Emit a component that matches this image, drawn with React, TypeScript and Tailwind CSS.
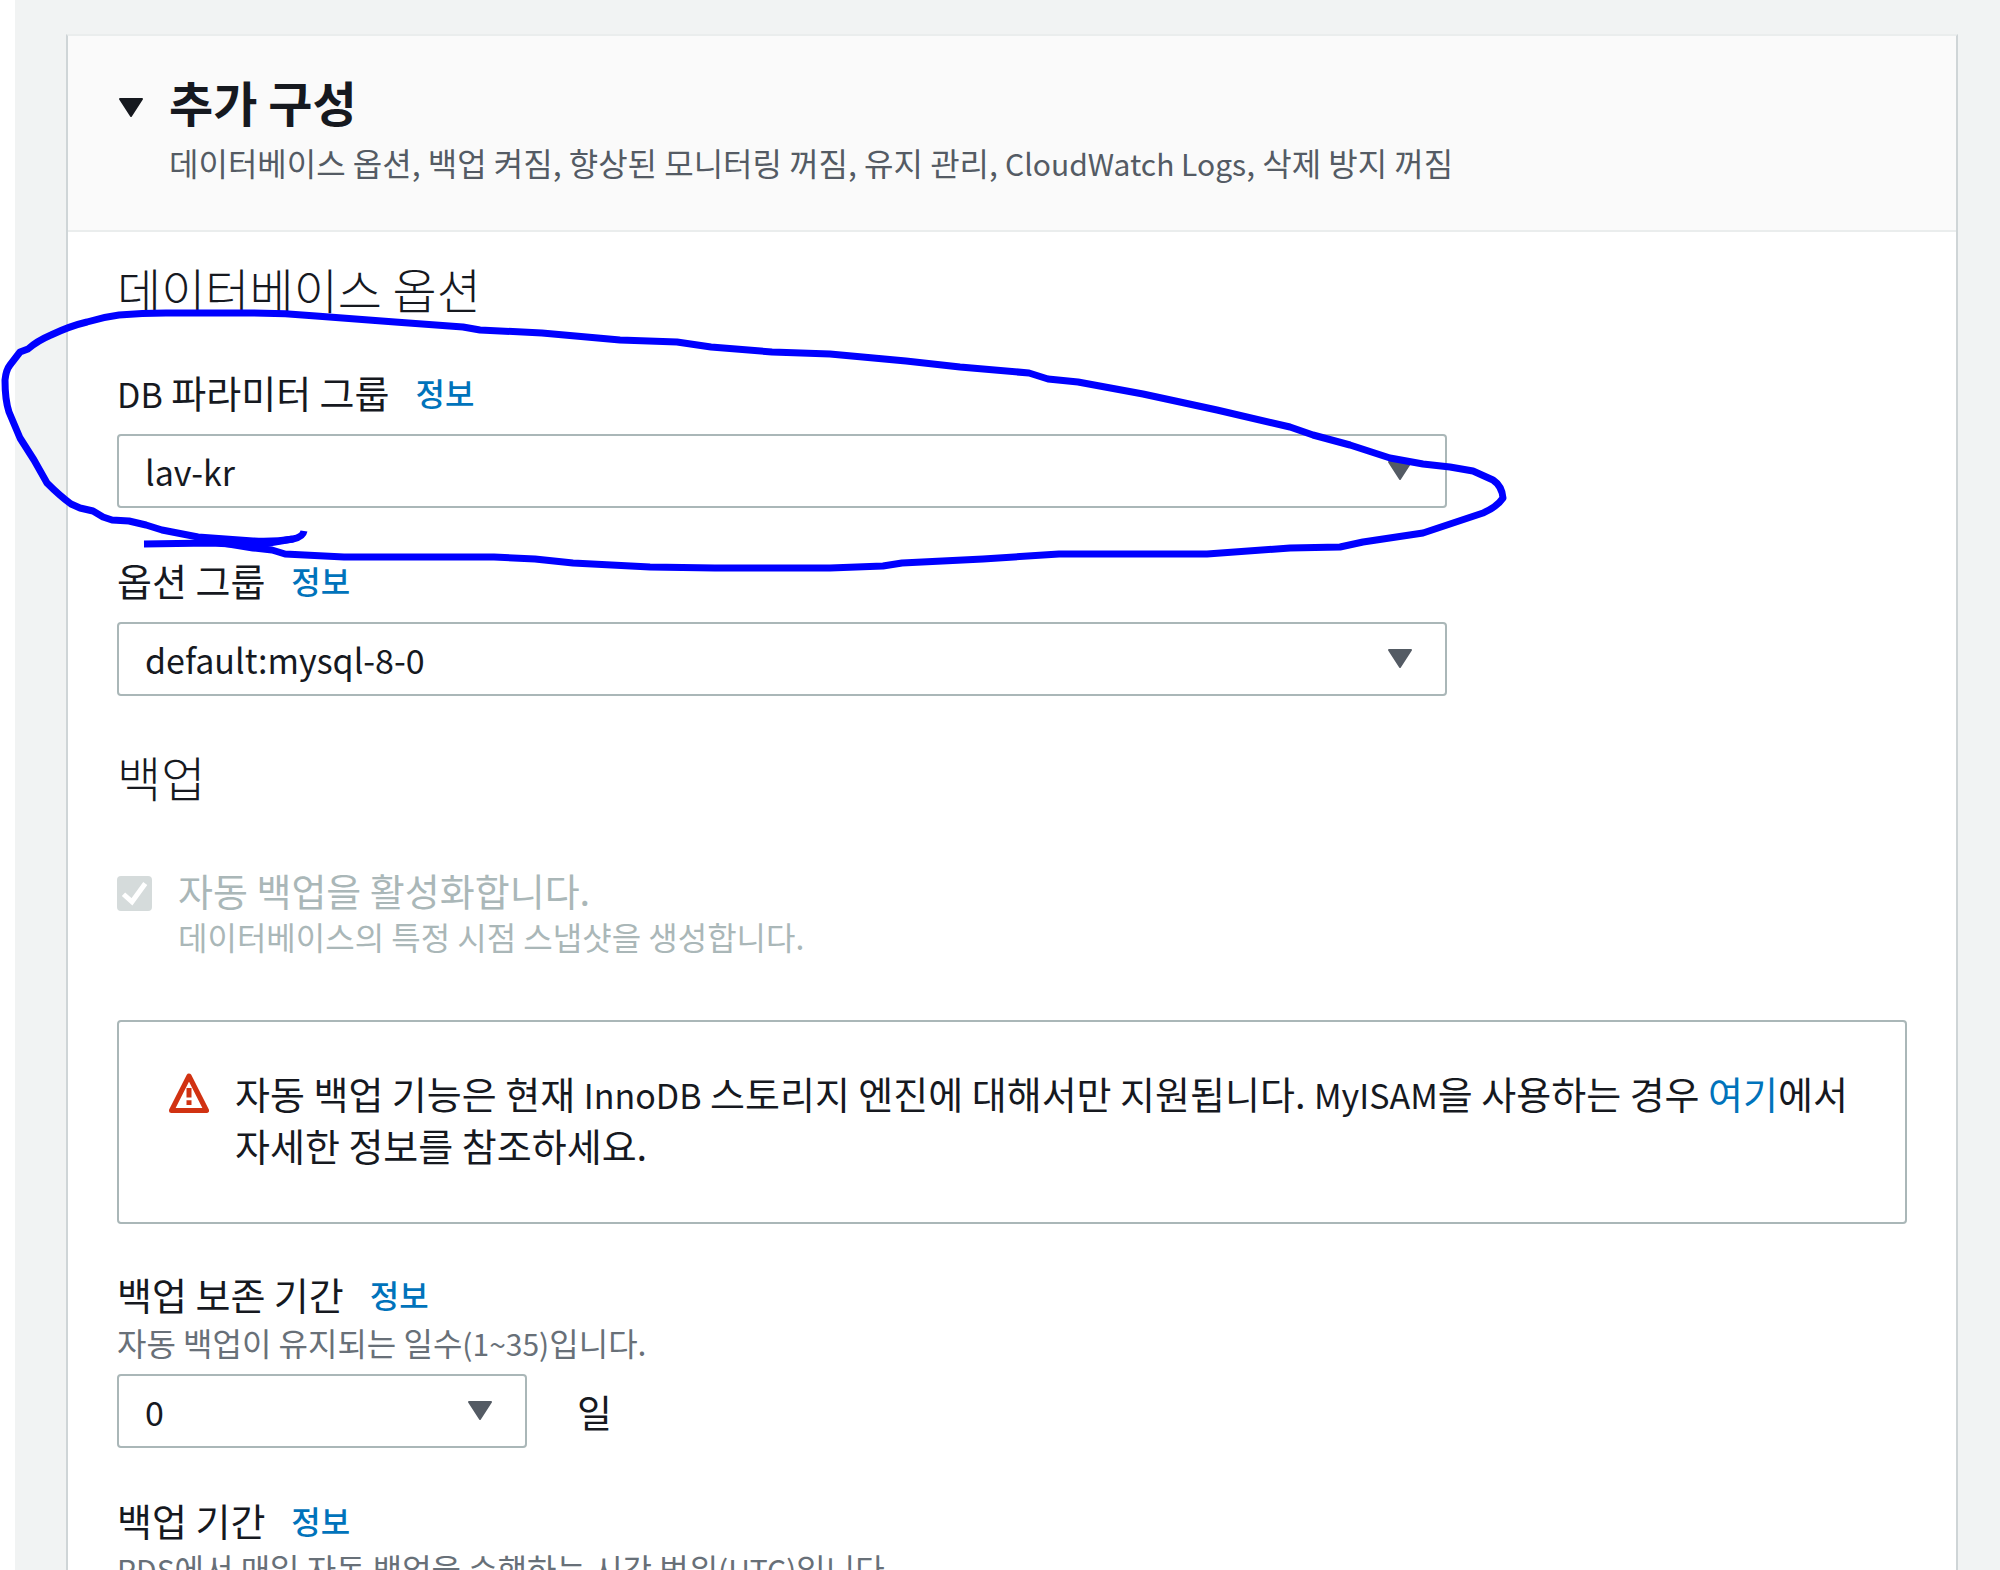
import { useState } from "react";
import type { ReactNode } from "react";
import clsx from "clsx";

const OPTION_GROUPS = ["default:mysql-8-0", "default:mysql-5-7"];
const PARAMETER_GROUPS = ["lav-kr", "default.mysql8.0"];
const RETENTION_DAYS = Array.from({ length: 36 }, (_, i) => String(i));

function Caret({ className }: { className?: string }) {
  return (
    <svg viewBox="0 0 26 22" className={clsx("h-[22px] w-[26px] shrink-0", className)} aria-hidden="true">
      <path d="M2 2h22L13 19z" fill="currentColor" stroke="currentColor" strokeWidth="2" strokeLinejoin="round" />
    </svg>
  );
}

function WarningIcon() {
  return (
    <svg viewBox="0 0 16 16" className="h-10 w-10 shrink-0 text-[#d13212]" fill="none" stroke="currentColor" strokeWidth="2" strokeLinejoin="round" aria-hidden="true">
      <path d="M8 1.2l7 13.8H1z" />
      <path d="M8 6v3.8M8 10.9v1.9" />
    </svg>
  );
}

// Latin runs sit one size below the Hangul around them
function En({ children }: { children: ReactNode }) {
  return <span className="text-[34px] leading-none">{children}</span>;
}
function EnSmall({ children }: { children: ReactNode }) {
  return <span className="text-[30px] leading-none">{children}</span>;
}

function Select({ id, value, options, onChange }: {
  id: string; value: string; options: string[]; onChange: (v: string) => void;
}) {
  return (
    <div className="relative">
      <select
        id={id} value={value}
        onChange={e => onChange(e.target.value)}
        className="block h-[74px] w-full appearance-none rounded-[4px] border-2 border-[#aab7b8] bg-white pl-[26px] pr-20 text-[34px] text-[#16191f]"
      >
        {options.map(o => <option key={o} value={o}>{o}</option>)}
      </select>
      <Caret className="pointer-events-none absolute right-[34px] top-[26px] text-[#545b64]" />
    </div>
  );
}

function FieldLabel({ htmlFor, children }: { htmlFor: string; children: ReactNode }) {
  return (
    <div className="flex items-center gap-[26px] leading-[52px]">
      <label htmlFor={htmlFor} className="text-[38px]">{children}</label>
      <a href="#info" className="text-[32px] font-medium text-[#0073bb]">정보</a>
    </div>
  );
}

// Freehand pen mark around the parameter group field
function PenMark() {
  return (
    <svg viewBox="0 0 1520 600" className="pointer-events-none absolute left-0 top-0 h-[600px] w-[1520px]" fill="none" stroke="#0000ff" strokeWidth="7" strokeLinejoin="round" aria-hidden="true">
      <path d="M304 531Q303 537 293 539Q275 542 253 541L198 537L162 530L146 525L129 521L112 520L103 517L93 511L80 508L71 504Q60 496 47 483L34 460L20 438L9 412Q5 400 5 380Q6 370 10 365L20 352L28 349Q37 341 51 335Q70 326 87 322Q103 317 119 315Q142 313 166 313H253Q285 313 316 316L395 322L463 327L480 330L542 333L620 340L677 342L711 347L772 352L830 354L906 361L960 367L1029 373L1048 379L1078 382L1143 394L1217 410L1290 427L1313 435L1350 445L1390 458L1423 464L1450 467L1473 471L1493 480Q1502 486 1503 498Q1497 507 1483 513L1450 524L1423 533L1363 542L1340 547L1290 548L1207 554L1059 554L983 559L902 563L883 566L830 568L715 568L650 567L573 563L535 559L494 557L344 557L285 554L272 550L253 548L198 539" />
      <path d="M144 544L210 543L257 545L293 539" />
    </svg>
  );
}

export default function App() {
  const [paramGroup, setParamGroup]   = useState("lav-kr");
  const [optionGroup, setOptionGroup] = useState("default:mysql-8-0");
  const [retention, setRetention]     = useState("0");

  return (
    <div className="relative h-screen overflow-hidden bg-white pl-[15px] font-['Noto_Sans_CJK_KR',sans-serif] text-[#16191f]">
      <main className="bg-[#f1f3f3] pl-[51px] pr-[42px] pt-[34px]">
        <section className="min-h-screen border-x-2 border-t-2 border-x-[#cfd5d7] border-t-[#eaeded] bg-white">
          {/* Header */}
          <header className="flex gap-[25px] border-b-2 border-[#eaeded] bg-[#fafafa] px-[50px] pb-[42px] pt-[30px]">
            <button type="button" aria-label="추가 구성" aria-expanded="true" className="flex h-[84px] items-center">
              <Caret />
            </button>
            <div>
              <h1 className="text-[48px] font-bold leading-[70px]">추가 구성</h1>
              <p className="text-[32px] leading-[52px] text-[#545b64]">
                데이터베이스 옵션, 백업 켜짐, 향상된 모니터링 꺼짐, 유지 관리, <EnSmall>CloudWatch Logs</EnSmall>, 삭제 방지 꺼짐
              </p>
            </div>
          </header>

          <div className="px-[49px] pt-6">
            <h2 className="text-[48px] font-light leading-[64px]">데이터베이스 옵션</h2>

            <div className="mt-[46px] grid grid-cols-4 gap-x-[50px] gap-y-[46px]">
              <div className="col-span-3">
                <FieldLabel htmlFor="param-group"><En>DB</En> 파라미터 그룹</FieldLabel>
                <div className="mt-4">
                  <Select id="param-group" value={paramGroup} options={PARAMETER_GROUPS} onChange={setParamGroup} />
                </div>
              </div>
              <div className="col-span-3">
                <FieldLabel htmlFor="option-group">옵션 그룹</FieldLabel>
                <div className="mt-4">
                  <Select id="option-group" value={optionGroup} options={OPTION_GROUPS} onChange={setOptionGroup} />
                </div>
              </div>
            </div>

            <h2 className="mt-12 text-[48px] font-light leading-[64px]">백업</h2>

            <div className="mt-[58px] flex gap-[26px] text-[#aab7b8]">
              <span className="relative mt-[10px] h-[35px] w-[35px] shrink-0">
                <input
                  id="auto-backup" type="checkbox" checked disabled readOnly
                  className="block h-[35px] w-[35px] appearance-none rounded-[4px] bg-[#d5dbdb]"
                />
                <svg viewBox="0 0 14 14" className="pointer-events-none absolute inset-0 h-full w-full" fill="none" stroke="#fff" strokeWidth="2" aria-hidden="true">
                  <path d="M2.6 7.3l3.4 3 5.3-7.3" />
                </svg>
              </span>
              <div>
                <label htmlFor="auto-backup" className="block text-[38px] leading-[48px]">자동 백업을 활성화합니다.</label>
                <p className="text-[32px] leading-[44px]">데이터베이스의 특정 시점 스냅샷을 생성합니다.</p>
              </div>
            </div>

            <div className="mt-[62px] flex gap-[26px] rounded-[4px] border-2 border-[#aab7b8] px-[50px] pb-[51px] pt-[45px]">
              <div className="flex h-[52px] items-center">
                <WarningIcon />
              </div>
              <p className="break-keep text-[38px] leading-[52px]">
                자동 백업 기능은 현재 <En>InnoDB</En> 스토리지 엔진에 대해서만 지원됩니다. <En>MyISAM</En>을 사용하는 경우{" "}
                <a href="#here" className="text-[#0073bb]">여기</a>에서 자세한 정보를 참조하세요.
              </p>
            </div>

            <div className="mt-11">
              <FieldLabel htmlFor="retention">백업 보존 기간</FieldLabel>
              <p className="text-[32px] leading-[44px] text-[#687078]">자동 백업이 유지되는 일수<EnSmall>(1~35)</EnSmall>입니다.</p>
              <div className="mt-[10px] grid grid-cols-4 items-center gap-x-[50px]">
                <Select id="retention" value={retention} options={RETENTION_DAYS} onChange={setRetention} />
                <span className="text-[38px] leading-[52px]">일</span>
              </div>
            </div>

            <div className="mt-[46px]">
              <FieldLabel htmlFor="window">백업 기간</FieldLabel>
              <p id="window" className="text-[32px] leading-[44px] text-[#687078]">
                <EnSmall>RDS</EnSmall>에서 매일 자동 백업을 수행하는 시간 범위<EnSmall>(UTC)</EnSmall>입니다.
              </p>
            </div>
          </div>
        </section>
      </main>
      <PenMark />
    </div>
  );
}
